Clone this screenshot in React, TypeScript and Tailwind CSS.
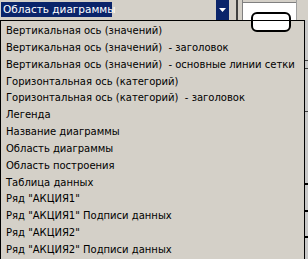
import React from "react";

const items = [
  "Вертикальная ось (значений)",
  "Вертикальная ось (значений)  - заголовок",
  "Вертикальная ось (значений)  - основные линии сетки",
  "Горизонтальная ось (категорий)",
  "Горизонтальная ось (категорий)  - заголовок",
  "Легенда",
  "Название диаграммы",
  "Область диаграммы",
  "Область построения",
  "Таблица данных",
  'Ряд "АКЦИЯ1"',
  'Ряд "АКЦИЯ1" Подписи данных',
  'Ряд "АКЦИЯ2"',
  'Ряд "АКЦИЯ2" Подписи данных',
];

export default function App() {
  return (
    <div
      className="w-[308px] h-[259px] overflow-hidden bg-[#d4d0c8] text-black text-[10px]"
      style={{ fontFamily: '"DejaVu Sans", sans-serif' }}
    >
      <div className="flex h-[20px]">
        <div className="w-[216px] pt-[2px] pl-[1px]">
          <span className="inline-block h-[15px] w-[111px] bg-[#0a246a] pl-[2px] text-white text-[10.5px] leading-[15px] whitespace-pre">
            Область диаграммы
          </span>
        </div>
        <div className="w-[13px] h-[20px] bg-[#0a246a] flex items-center justify-center">
          <svg width="7" height="4" viewBox="0 0 7 4">
            <path d="M0 0h7L3.5 4z" fill="#fff" />
          </svg>
        </div>
        <div className="w-[7px]" />
        <div className="w-[2px] bg-[#404040]" />
        <div className="w-[4px]" />
        <div className="w-[1px] bg-[#808080]" />
        <div className="w-[53px] pt-[2px]">
          <div className="h-[18px] bg-white border-t border-[#808080] pl-[8px] pt-[9px]">
            <div className="w-[40px] h-[20px] border-2 border-black rounded-[6px] bg-white" />
          </div>
        </div>
        <div className="flex-1 border-l border-[#a0a0a0]" />
      </div>
      <div className="flex">
        <div className="w-[305px] h-[239px] border-l border-t border-r border-black pt-[2px] pl-[5px] overflow-hidden">
          {items.map((t) => (
            <div key={t} className="h-[16.85px] leading-[16.85px] whitespace-pre">
              {t}
            </div>
          ))}
        </div>
        <div className="flex-1 bg-[#c8c8c8] flex flex-col">
          <div className="h-[40px]" />
          <div className="h-[1px] bg-[#404040]" />
          <div className="h-[7px]" />
          <div className="h-[1px] bg-[#404040]" />
          <div className="h-[42px]" />
          <div className="h-[1px] bg-[#404040]" />
          <div className="h-[71px]" />
          <div className="h-[2px] bg-black" />
          <div className="h-[25px]" />
          <div className="h-[2px] bg-black" />
          <div className="h-[24px]" />
          <div className="h-[2px] bg-black" />
        </div>
      </div>
    </div>
  );
}
